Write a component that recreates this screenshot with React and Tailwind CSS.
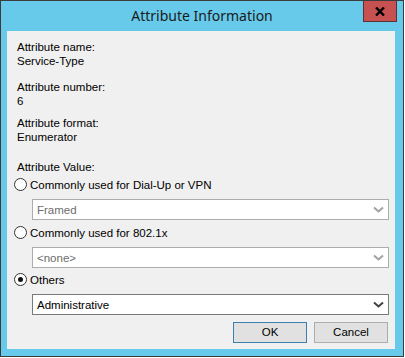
import React from 'react';

function Chevron({ color }) {
  return (
    <svg width="11" height="7" viewBox="0 0 11 7" className="shrink-0">
      <path d="M1 1.5 L5.5 5.5 L10 1.5" fill="none" stroke={color} strokeWidth="2" />
    </svg>
  );
}

function Radio({ checked, label }) {
  return (
    <div className="flex items-center h-[15px]">
      <span className="w-[13px] h-[13px] rounded-full border border-[#333] bg-white flex items-center justify-center ml-[7px]">
        {checked && <span className="w-[5px] h-[5px] rounded-full bg-[#111]" />}
      </span>
      <span className="ml-[3px] text-[#000]">{label}</span>
    </div>
  );
}

function Combo({ value, disabled }) {
  return (
    <div
      className={
        disabled
          ? 'ml-[25px] w-[357px] h-[21px] border border-[#adadad] bg-white flex items-center pl-[4px] pr-[4px] text-[#6d6d6d]'
          : 'ml-[25px] w-[357px] h-[21px] border border-[#7a7a7a] bg-white flex items-center pl-[4px] pr-[4px] text-[#000]'
      }
    >
      <span className="flex-1">{value}</span>
      <Chevron color={disabled ? '#a0a0a0' : '#404040'} />
    </div>
  );
}

export default function App() {
  return (
    <div className="w-[405px] h-[358px] bg-white">
      <div className="w-[404px] h-[357px] border border-[#3b3b3b] bg-[#67caea] flex flex-col">
        {/* title bar */}
        <div className="relative h-[30px] flex items-center justify-center">
          <span className="text-[14px] text-[#1a1a1a] font-['Noto_Sans','Open_Sans',sans-serif] leading-none">
            Attribute Information
          </span>
          <div className="absolute top-0 left-[362px] w-[34px] h-[21px] bg-[#c75050] border-x border-b border-[#5b3030] flex items-center justify-center">
            <svg width="10" height="9" viewBox="0 0 10 9">
              <path d="M1 0.5 L9 8.5 M9 0.5 L1 8.5" stroke="#000" strokeWidth="2.4" />
            </svg>
          </div>
        </div>

        {/* client area */}
        <div className="mx-[6px] w-[388px] h-[318px] bg-[#f0f0f0] font-['Liberation_Sans',Arial,sans-serif] text-[11.5px] leading-[14px] text-[#000] pt-[9px]">
          <div className="pl-[10px]">
            <div>Attribute name:</div>
            <div>Service-Type</div>
            <div className="mt-[12px]">Attribute number:</div>
            <div>6</div>
            <div className="mt-[8px]">Attribute format:</div>
            <div>Enumerator</div>
            <div className="mt-[16px]">Attribute Value:</div>
          </div>

          <div className="mt-[3px]">
            <Radio label="Commonly used for Dial-Up or VPN" />
            <div className="mt-[7px]">
              <Combo value="Framed" disabled />
            </div>
            <div className="mt-[5px]">
              <Radio label="Commonly used for 802.1x" />
            </div>
            <div className="mt-[7px]">
              <Combo value="<none>" disabled />
            </div>
            <div className="mt-[4px]">
              <Radio checked label="Others" />
            </div>
            <div className="mt-[7px]">
              <Combo value="Administrative" />
            </div>
          </div>

          <div className="flex justify-end gap-[7px] mt-[7px] pr-[7px]">
            <button className="w-[74px] h-[21px] bg-[#e1e1e1] border border-[#3c7fb1] text-[#000] leading-none">
              OK
            </button>
            <button className="w-[74px] h-[21px] bg-[#e1e1e1] border border-[#adadad] text-[#000] leading-none">
              Cancel
            </button>
          </div>
        </div>
      </div>
    </div>
  );
}
